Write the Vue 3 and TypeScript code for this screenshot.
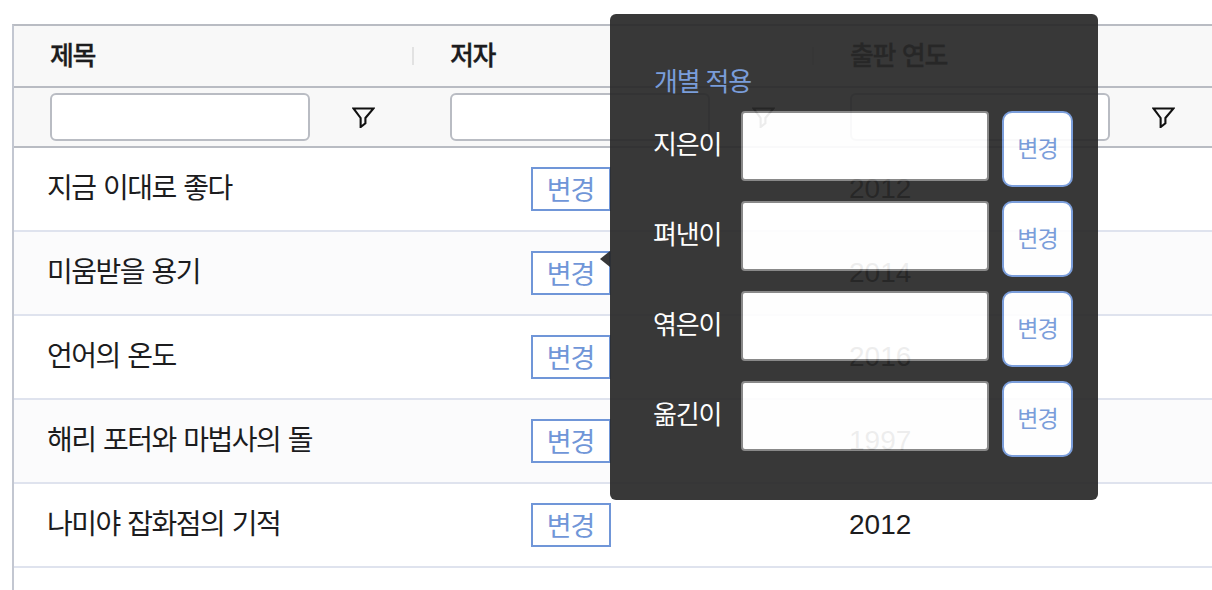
<script setup lang="ts">
interface Book {
  title: string;
  year: number;
}

const books: Book[] = [
  { title: "지금 이대로 좋다", year: 2012 },
  { title: "미움받을 용기", year: 2014 },
  { title: "언어의 온도", year: 2016 },
  { title: "해리 포터와 마법사의 돌", year: 1997 },
  { title: "나미야 잡화점의 기적", year: 2012 },
];

const columns = ["제목", "저자", "출판 연도"];
const roles = ["지은이", "펴낸이", "엮은이", "옮긴이"];
</script>

<template>
  <div class="page">
    <div class="grid">
      <div class="head">
        <div class="head-cell" v-for="(col, i) in columns" :key="col">
          <span>{{ col }}</span>
          <i v-if="i < 2" class="sep"></i>
        </div>
      </div>
      <div class="filters">
        <div class="filter-cell" v-for="col in columns" :key="col">
          <input class="filter-input" type="text" />
          <svg class="funnel" width="23" height="21" viewBox="0 0 24 22" fill="none">
            <path d="M1.5 1.5H22.5L14 11.5V17L9 21V11.5Z" stroke="#111" stroke-width="2.2" />
          </svg>
        </div>
      </div>
      <div class="row" v-for="book in books" :key="book.title">
        <div class="cell title"><span>{{ book.title }}</span></div>
        <div class="cell author"><button class="change">변경</button></div>
        <div class="cell year">{{ book.year }}</div>
      </div>
      <div class="row empty"></div>
    </div>

    <div class="popup">
      <h3>개별 적용</h3>
      <div class="popup-rows">
        <div class="popup-row" v-for="role in roles" :key="role">
          <label>{{ role }}</label>
          <input type="text" />
          <button>변경</button>
        </div>
      </div>
    </div>
  </div>
</template>

<style scoped>
.page {
  position: relative;
  width: 1212px;
  height: 590px;
  overflow: hidden;
  padding: 24px 0 0 12px;
  box-sizing: border-box;
  background: #fff;
  font-family: "Liberation Sans", "Noto Sans CJK KR", sans-serif;
  color: #1c1c1e;
}
.grid {
  border-left: 2px solid #c3c7d1;
  border-top: 2px solid #b9bcc3;
  width: 1300px;
}
.head,
.filters,
.row {
  display: grid;
  grid-template-columns: 400px 400px 1fr;
}
.head {
  height: 60px;
  background: #f8f8f8;
  border-bottom: 2px solid #b9bcc3;
}
.head-cell {
  display: flex;
  align-items: center;
  justify-content: space-between;
  padding-left: 36px;
  font-size: 26px;
  font-weight: 500;
  letter-spacing: -1.4px;
  word-spacing: 1px;
  -webkit-text-stroke: 0.3px #1c1c1e;
}
.head-cell span {
  padding-bottom: 6px;
}
.sep {
  width: 2px;
  height: 18px;
  background: #e2e2e2;
}
.filters {
  height: 58px;
  background: #f8f8f8;
  border-bottom: 2px solid #b9bcc3;
}
.filter-cell {
  display: flex;
  align-items: center;
  gap: 42px;
  padding-left: 36px;
}
.filter-input {
  width: 260px;
  height: 48px;
  box-sizing: border-box;
  border: 2px solid #b9bcc3;
  border-radius: 6px;
  background: #fff;
}
.funnel {
  flex: none;
}
.row {
  height: 82px;
  border-bottom: 2px solid #dfe3ee;
  background: #fff;
}
.row:nth-child(4),
.row:nth-child(6) {
  background: #fbfbfc;
}
.cell {
  display: flex;
  align-items: center;
  font-size: 28px;
}
.title {
  padding-left: 33px;
  letter-spacing: -1.5px;
  word-spacing: 1.2px;
}
.title span {
  padding-bottom: 6px;
}
.author {
  padding-left: 117px;
}
.year {
  padding-left: 35px;
}
.change {
  width: 80px;
  height: 44px;
  padding: 0 1px 6px 0;
  box-sizing: border-box;
  border: 2px solid #7096d8;
  background: #fff;
  color: #7096d8;
  font: inherit;
  font-size: 27px;
  letter-spacing: -1.2px;
}
.popup {
  position: absolute;
  left: 610px;
  top: 14px;
  width: 488px;
  height: 486px;
  box-sizing: border-box;
  padding: 52px 25px 0 43px;
  background: #282828;
  border-radius: 6px;
  opacity: 0.92;
}
.popup::before {
  content: "";
  position: absolute;
  left: -10px;
  top: 237px;
  border-style: solid;
  border-width: 8px 10px 8px 0;
  border-color: transparent #282828 transparent transparent;
}
.popup h3 {
  margin: 0 0 13px;
  padding-left: 1px;
  font-size: 26px;
  line-height: 32px;
  font-weight: 400;
  letter-spacing: -1.2px;
  color: #7096d8;
}
.popup-rows {
  display: flex;
  flex-direction: column;
  gap: 14px;
}
.popup-row {
  display: flex;
  align-items: flex-start;
}
.popup-row label {
  width: 88px;
  flex: none;
  font-size: 26px;
  line-height: 69px;
  letter-spacing: -1.2px;
  color: #fff;
}
.popup-row input {
  width: 248px;
  height: 70px;
  box-sizing: border-box;
  border: 2px solid #808080;
  border-radius: 4px;
  background: #fff;
}
.popup-row button {
  width: 71px;
  height: 76px;
  margin-left: 13px;
  padding: 0 0 5px;
  box-sizing: border-box;
  border: 2px solid #7096d8;
  border-radius: 10px;
  background: #fff;
  color: #7096d8;
  font: inherit;
  font-size: 23px;
  letter-spacing: -1px;
}
</style>

<style>
html,
body {
  margin: 0;
  overflow: hidden;
}
</style>
